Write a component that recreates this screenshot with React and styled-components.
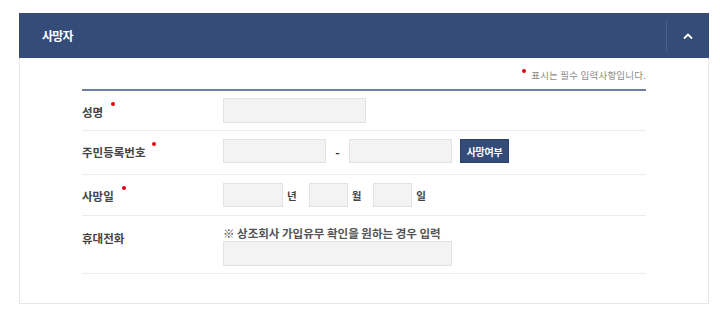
import React from "react";
import styled, { createGlobalStyle } from "styled-components";

const Global = createGlobalStyle`
  html, body { margin: 0; padding: 0; background: #fff; }
  body { font-family: "Noto Sans CJK KR", "Noto Sans", sans-serif; }
  * { box-sizing: border-box; }
`;

const Card = styled.section`
  margin: 13px 0 0 19px;
  width: 690px;
  height: 291px;
  border: 1px solid #e6e6e6;
  border-top: none;
  background: #fff;
`;

const Header = styled.header`
  height: 45px;
  background: #344c77;
  display: flex;
  align-items: center;
  justify-content: space-between;
  padding-left: 23px;
  margin: 0 -1px;
`;

const Title = styled.h2`
  margin: 0;
  color: #fff;
  font-size: 12px;
  font-weight: 700;
  letter-spacing: -0.8px;
`;

const Toggle = styled.button`
  width: 43px;
  height: 30px;
  border: none;
  border-left: 1px solid rgba(255, 255, 255, 0.12);
  background: transparent;
  display: flex;
  align-items: center;
  justify-content: center;
  padding: 0;
  cursor: pointer;
`;

const Body = styled.div`
  padding: 0 62px 0 62px;
`;

const RequiredNote = styled.p`
  margin: 0;
  height: 31px;
  display: flex;
  align-items: center;
  justify-content: flex-end;
  padding-top: 2px;
  font-size: 9.5px;
  color: #8a8a8a;
  letter-spacing: 0.2px;
`;

const Dot = styled.span`
  display: inline-block;
  width: 4px;
  height: 4px;
  border-radius: 50%;
  background: #e60012;
  position: relative;
  top: ${(p) => p.$top || -10}px;
  margin-left: ${(p) => p.$ml || 7}px;
  margin-right: ${(p) => p.$mr || 0}px;
  vertical-align: middle;
`;

const Table = styled.div`
  border-top: 2px solid #6e7fa1;
`;

const Row = styled.div`
  display: flex;
  align-items: flex-start;
  padding: ${(p) => p.$pad};
  border-bottom: 1px solid #ededed;
`;

const Label = styled.div`
  width: 141px;
  flex: none;
  padding-top: ${(p) => p.$pt || 5}px;
  line-height: 16px;
  font-size: 11.5px;
  font-weight: 700;
  color: #444;
  letter-spacing: 0px;
`;

const Field = styled.div`
  display: flex;
  flex-direction: ${(p) => (p.$column ? "column" : "row")};
  align-items: ${(p) => (p.$column ? "flex-start" : "center")};
  gap: ${(p) => p.$gap || 0}px;
`;

const Input = styled.input`
  width: ${(p) => p.$w}px;
  height: ${(p) => p.$h || 25}px;
  background: #f3f3f3;
  border: 1px solid #e3e3e3;
  outline: none;
  padding: 0 6px;
  font-size: 11px;
  margin: 0;
`;

const Dash = styled.span`
  width: 23px;
  text-align: center;
  font-size: 12px;
  font-weight: 700;
  color: #333;
`;

const Unit = styled.span`
  font-size: 10.5px;
  font-weight: 700;
  color: #444;
  margin: 0 12px 0 4px;
`;

const CheckButton = styled.button`
  margin-left: 8px;
  width: 49px;
  height: 24px;
  background: #344c77;
  border: 1px solid #2c4168;
  color: #fff;
  font-family: inherit;
  font-size: 10px;
  font-weight: 700;
  letter-spacing: -0.3px;
  padding: 0;
  cursor: pointer;
`;

const Hint = styled.div`
  font-size: 11.5px;
  line-height: 14px;
  font-weight: 700;
  color: #555;
  letter-spacing: 0px;
`;

export default function App() {
  return (
    <>
      <Global />
      <Card>
        <Header>
          <Title>사망자</Title>
          <Toggle aria-label="접기">
            <svg width="12" height="8" viewBox="0 0 12 8">
              <polyline
                points="2,6.5 6,2.5 10,6.5"
                fill="none"
                stroke="#fff"
                strokeWidth="1.8"
              />
            </svg>
          </Toggle>
        </Header>
        <Body>
          <RequiredNote>
            <Dot $top={-4} $ml={0} $mr={5} />
            표시는 필수 입력사항입니다.
          </RequiredNote>
          <Table>
            <Row $pad="7px 0 7px">
              <Label $pt={6}>
                성명
                <Dot $ml={8} />
              </Label>
              <Field>
                <Input $w={143} />
              </Field>
            </Row>
            <Row $pad="8px 0 11px">
              <Label $pt={5}>
                주민등록번호
                <Dot $ml={7} />
              </Label>
              <Field>
                <Input $w={103} $h={24} />
                <Dash>-</Dash>
                <Input $w={103} $h={24} />
                <CheckButton>사망여부</CheckButton>
              </Field>
            </Row>
            <Row $pad="8px 0 8px">
              <Label $pt={5}>
                사망일
                <Dot $ml={8} />
              </Label>
              <Field>
                <Input $w={60} $h={24} />
                <Unit>년</Unit>
                <Input $w={39} $h={24} />
                <Unit>월</Unit>
                <Input $w={39} $h={24} />
                <Unit>일</Unit>
              </Field>
            </Row>
            <Row $pad="10px 0 7px">
              <Label $pt={4}>휴대전화</Label>
              <Field $column $gap={1}>
                <Hint>※ 상조회사 가입유무 확인을 원하는 경우 입력</Hint>
                <Input $w={229} />
              </Field>
            </Row>
          </Table>
        </Body>
      </Card>
    </>
  );
}
